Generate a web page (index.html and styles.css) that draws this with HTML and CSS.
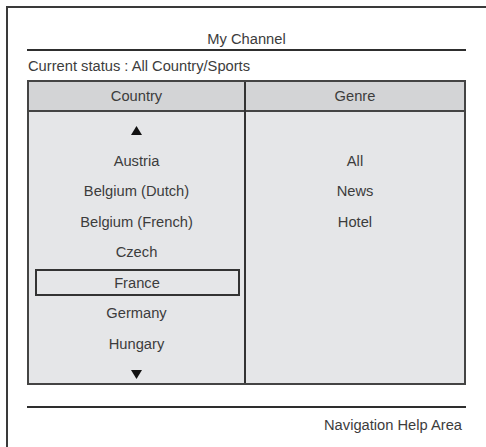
FILE: index.html
```html
<!DOCTYPE html>
<html lang="en">
<head>
    <meta charset="UTF-8">
    <title>My Channel</title>
    <link rel="stylesheet" href="styles.css">
</head>
<body>
    <div class="frame">
        <div class="title">My Channel</div>
        <div class="status">Current status : All Country/Sports</div>

        <div class="table">
            <div class="col country">
                <div class="head">Country</div>
                <div class="list">
                    <div class="row"><svg class="arrow" width="11" height="9" viewBox="0 0 11 9"><polygon points="5.5,0 11,9 0,9"/></svg></div>
                    <div class="row">Austria</div>
                    <div class="row">Belgium (Dutch)</div>
                    <div class="row">Belgium (French)</div>
                    <div class="row">Czech</div>
                    <div class="row"><span class="selected">France</span></div>
                    <div class="row">Germany</div>
                    <div class="row">Hungary</div>
                    <div class="row"><svg class="arrow" width="11" height="9" viewBox="0 0 11 9"><polygon points="0,0 11,0 5.5,9"/></svg></div>
                </div>
            </div>
            <div class="col genre">
                <div class="head">Genre</div>
                <div class="list">
                    <div class="row"></div>
                    <div class="row">All</div>
                    <div class="row">News</div>
                    <div class="row">Hotel</div>
                </div>
            </div>
        </div>

        <div class="help">Navigation Help Area</div>
    </div>
</body>
</html>
```

FILE: styles.css
```css
body {
    margin: 0;
    font-family: "Liberation Sans", Arial, sans-serif;
    font-size: 14.7px;
    color: #3c3c3c;
    background-color: white;
}
.frame {
    margin: 6px 0 0 6px;
    height: 441px;
    box-sizing: border-box;
    border-top: 2px solid #3a3a3a;
    border-left: 2px solid #3a3a3a;
    padding: 0 20px 0 19px;
}
.title {
    padding-top: 21px;
    line-height: 20px;
    text-align: center;
    border-bottom: 2px solid #2e2e2e;
}
.status {
    margin-top: 5px;
    line-height: 20px;
    padding-left: 1px;
}
.table {
    margin-top: 4px;
    display: grid;
    grid-template-columns: 217px 1fr;
    border: 2px solid #444;
    background-color: #e5e6e8;
}
.country {
    border-right: 2px solid #333;
}
.head {
    height: 28px;
    line-height: 28px;
    text-align: center;
    background-color: #d3d4d6;
    border-bottom: 2px solid #444;
}
.list {
    padding-top: 3px;
    height: 268px;
}
.row {
    height: 30.5px;
    display: flex;
    align-items: center;
    justify-content: center;
}
.arrow {
    fill: #111;
}
.selected {
    box-sizing: border-box;
    width: 205px;
    height: 27px;
    margin-left: 1px;
    display: flex;
    align-items: center;
    justify-content: center;
    border: 2px solid #333;
}
.help {
    margin-top: 21px;
    border-top: 2px solid #2e2e2e;
    padding-top: 7px;
    line-height: 20px;
    text-align: right;
    padding-right: 4px;
}
```
